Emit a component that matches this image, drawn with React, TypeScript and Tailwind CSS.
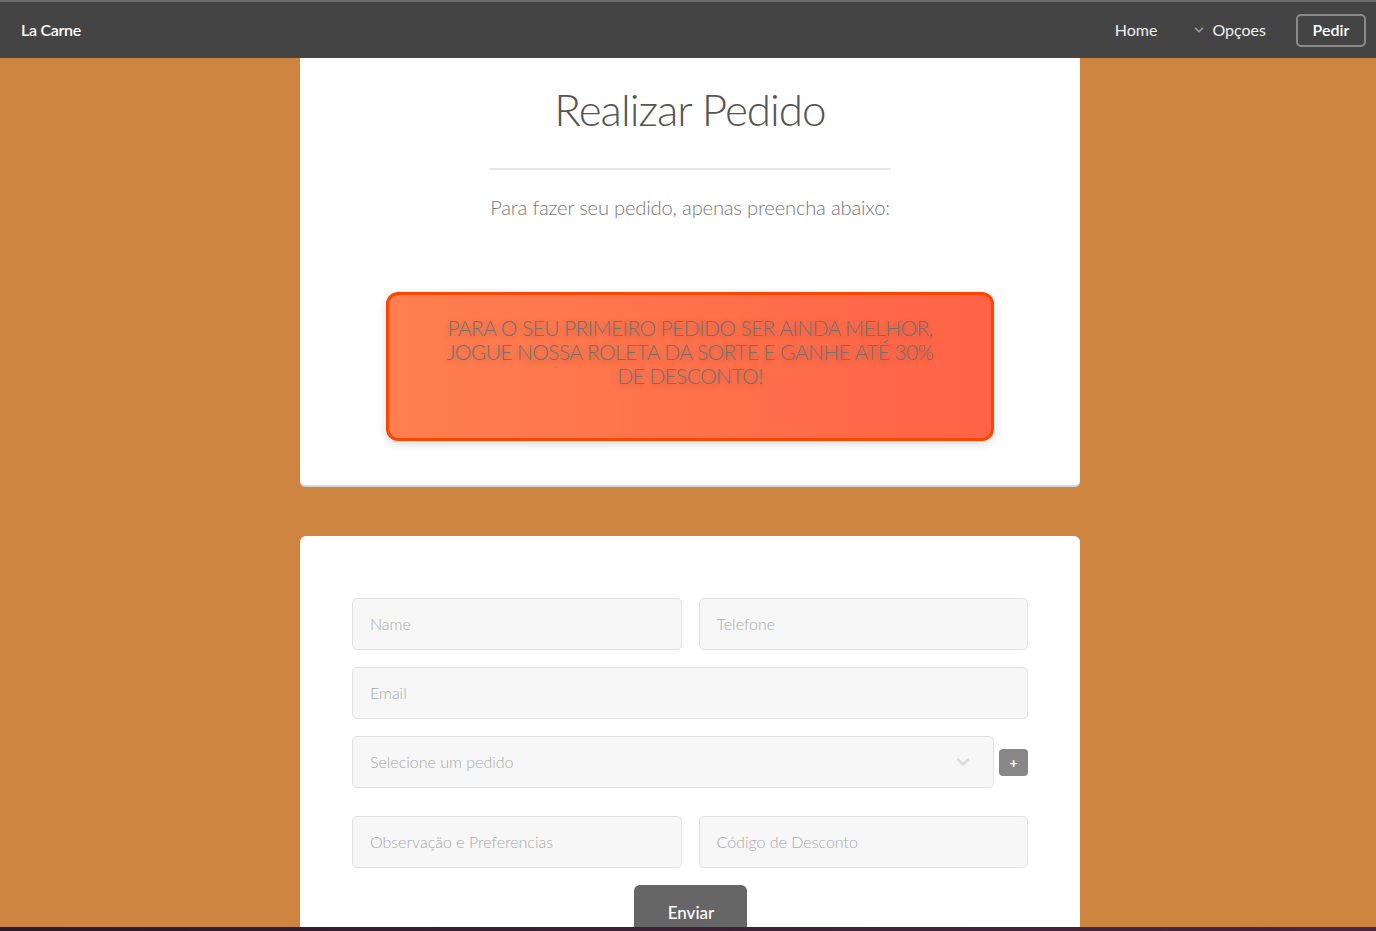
import { ChevronDown } from 'lucide-react';

const font = { fontFamily: 'Lato, "Open Sans", sans-serif' };

function Field({ placeholder, className = '' }: { placeholder: string; className?: string }) {
  return (
    <div
      className={`flex h-[52px] items-center rounded-[5px] border border-[#e2e2e2] bg-[#f7f7f7] pl-[17px] text-[16px] font-light text-[#a9a9a9] ${className}`}
    >
      {placeholder}
    </div>
  );
}

export default function App() {
  return (
    <div className="flex h-[931px] flex-col overflow-hidden bg-[#cd853f]" style={font}>
      <div className="flex-1 overflow-hidden">
        {/* navbar */}
        <div className="flex h-[58px] items-center border-t-2 border-[#6a6a6a] bg-[#444444] pl-[21px] pr-[10px]">
          <div className="text-[16px] font-semibold tracking-[-0.3px] text-white">La Carne</div>
          <div className="ml-auto flex items-center">
            <div className="text-[16px] text-[#eeeeee]">Home</div>
            <div className="ml-[35px] flex items-center text-[16px] text-[#eeeeee]">
              <ChevronDown size={14} strokeWidth={3} className="mr-[6px] text-[#9a9a9a]" />
              Opçoes
            </div>
            <div className="ml-[30px] flex h-[33px] w-[70px] items-center justify-center rounded-[5px] border-2 border-[#8a8a8a] text-[16px] font-semibold text-white">
              Pedir
            </div>
          </div>
        </div>

        <div className="pl-[4px]">
          {/* card 1 */}
          <div className="mx-auto w-[780px] rounded-b-[5px] bg-white pb-[44px] shadow-[0_2px_0_#d8d8d8]">
            <h1 className="pt-[24px] text-center text-[44px] leading-[54px] font-light tracking-[-1px] text-[#555555]">
              Realizar Pedido
            </h1>
            <div className="mx-auto mt-[32px] h-[2px] w-[401px] bg-[#e6e6e6]" />
            <p className="mt-[24px] text-center text-[20.2px] leading-[26px] font-light tracking-[-0.2px] text-[#777777]">
              Para fazer seu pedido, apenas preencha abaixo:
            </p>
            <div className="mx-auto mt-[72px] h-[149px] w-[608px] rounded-[12px] border-[3px] border-[#ff4500] bg-gradient-to-r from-[#ff7f50] to-[#ff6347] pt-[21px] shadow-[0_3px_10px_rgba(0,0,0,0.15)]">
              <p className="text-center text-[21px] leading-[24px] font-light tracking-[-0.6px] whitespace-nowrap text-[#77716e] [text-shadow:0_2px_6px_rgba(0,0,0,0.25)]">
                PARA O SEU PRIMEIRO PEDIDO SER AINDA MELHOR,
                <br />
                JOGUE NOSSA ROLETA DA SORTE E GANHE ATÉ 30%
                <br />
                DE DESCONTO!
              </p>
            </div>
          </div>

          {/* card 2 */}
          <div className="mx-auto mt-[51px] w-[780px] rounded-t-[6px] bg-white px-[52px] pt-[62px]">
            <div className="grid grid-cols-2 gap-x-[17px]">
              <Field placeholder="Name" />
              <Field placeholder="Telefone" />
            </div>
            <Field placeholder="Email" className="mt-[17px]" />
            <div className="mt-[17px] flex items-center">
              <div className="flex h-[52px] flex-1 items-center rounded-[5px] border border-[#e2e2e2] bg-[#f7f7f7] pl-[17px] pr-[20px] text-[16px] font-light text-[#a9a9a9]">
                Selecione um pedido
                <ChevronDown size={20} strokeWidth={3} className="ml-auto text-[#dcdcdc]" />
              </div>
              <div className="ml-[5px] flex h-[27px] w-[29px] items-center justify-center rounded-[4px] bg-[#888888] text-[14px] font-bold text-white">
                +
              </div>
            </div>
            <div className="mt-[28px] grid grid-cols-2 gap-x-[17px]">
              <Field placeholder="Observação e Preferencias" />
              <Field placeholder="Código de Desconto" />
            </div>
            <div className="mt-[17px] flex justify-center">
              <div className="flex h-[60px] w-[113px] justify-center rounded-t-[6px] bg-[#666666] pt-[15px] pl-[2px] text-[17px] font-medium text-white">
                Enviar
              </div>
            </div>
          </div>
        </div>
      </div>
      <div className="h-[4px] bg-gradient-to-r from-[#2b1a2b] via-[#3a2236] to-[#4a2540]" />
    </div>
  );
}
